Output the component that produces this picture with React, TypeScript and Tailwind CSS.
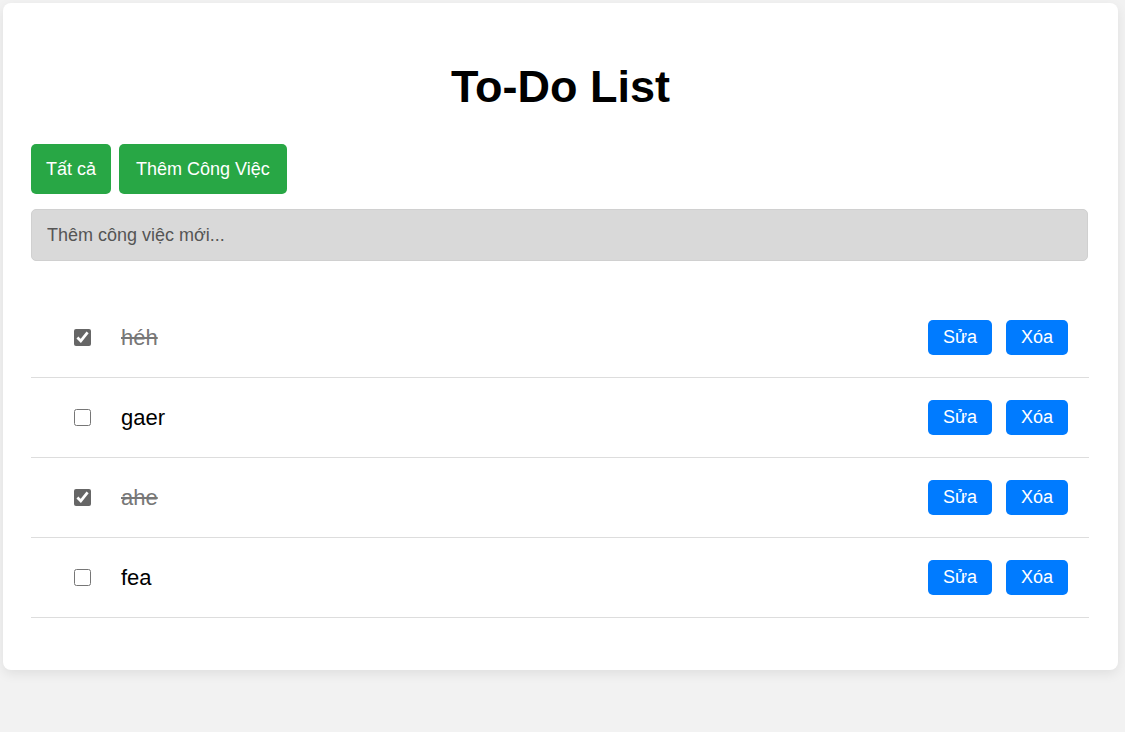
import React from "react";

const todos = [
  { text: "héh", done: true },
  { text: "gaer", done: false },
  { text: "ahe", done: true },
  { text: "fea", done: false },
];

export default function App() {
  return (
    <div
      className="min-h-[732px] bg-[#f2f2f2] pt-[3px] pl-[3px]"
      style={{ fontFamily: '"Liberation Sans", Arial, sans-serif' }}
    >
      <div className="w-[1115px] h-[667px] bg-white rounded-[8px] shadow-[0_4px_12px_rgba(0,0,0,0.08)] px-[28px] pt-[59px]">
        <h1 className="text-center text-[45px] leading-[50px] font-bold text-black">To-Do List</h1>
        <div className="flex gap-[8px] mt-[32px]">
          <button className="h-[50px] px-[15px] rounded-[5px] bg-[#28a745] text-white text-[18px]">Tất cả</button>
          <button className="h-[50px] px-[17px] rounded-[5px] bg-[#28a745] text-white text-[18px]">Thêm Công Việc</button>
        </div>
        <input
          className="mt-[15px] block w-[1057px] h-[52px] px-[15px] rounded-[5px] bg-[#d9d9d9] border border-[#d0d0d0] text-[18px] placeholder:text-[#555] outline-none"
          placeholder="Thêm công việc mới..."
        />
        <ul className="mt-[37px] w-[1058px]">
          {todos.map((t, i) => (
            <li key={i} className="flex items-center h-[80px] border-b border-[#ddd] pl-[43px] pr-[21px]">
              <input
                type="checkbox"
                defaultChecked={t.done}
                className="w-[17px] h-[17px] m-0 accent-[#666]"
              />
              <span className={`ml-[30px] text-[22px] ${t.done ? "line-through text-[#777]" : "text-black"}`}>
                {t.text}
              </span>
              <div className="ml-auto flex gap-[14px]">
                <button className="h-[35px] px-[15px] rounded-[5px] bg-[#007bff] text-white text-[18px]">Sửa</button>
                <button className="h-[35px] px-[15px] rounded-[5px] bg-[#007bff] text-white text-[18px]">Xóa</button>
              </div>
            </li>
          ))}
        </ul>
      </div>
    </div>
  );
}
